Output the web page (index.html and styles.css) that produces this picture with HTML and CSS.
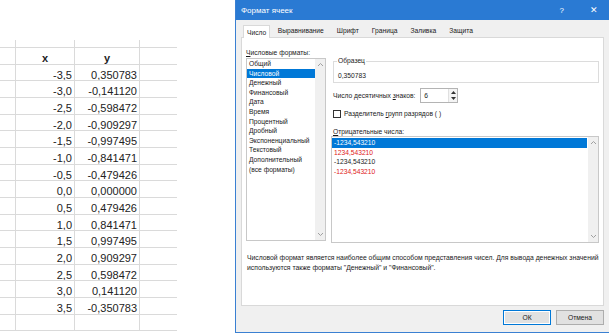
FILE: index.html
```html
<!DOCTYPE html>
<html lang="ru">
<head>
<meta charset="utf-8">
<link rel="stylesheet" href="styles.css">
</head>
<body>
<div class="page">
  <div class="sheet">
    <div class="grid">
      <div class="c top"></div><div class="c top"></div><div class="c top"></div><div class="c top last"></div>
      <div class="c"></div><div class="c hdr">x</div><div class="c hdr">y</div><div class="c last"></div>
      <div class="c"></div><div class="c num">-3,5</div><div class="c num">0,350783</div><div class="c last"></div>
      <div class="c"></div><div class="c num">-3,0</div><div class="c num">-0,141120</div><div class="c last"></div>
      <div class="c"></div><div class="c num">-2,5</div><div class="c num">-0,598472</div><div class="c last"></div>
      <div class="c"></div><div class="c num">-2,0</div><div class="c num">-0,909297</div><div class="c last"></div>
      <div class="c"></div><div class="c num">-1,5</div><div class="c num">-0,997495</div><div class="c last"></div>
      <div class="c"></div><div class="c num">-1,0</div><div class="c num">-0,841471</div><div class="c last"></div>
      <div class="c"></div><div class="c num">-0,5</div><div class="c num">-0,479426</div><div class="c last"></div>
      <div class="c"></div><div class="c num">0,0</div><div class="c num">0,000000</div><div class="c last"></div>
      <div class="c"></div><div class="c num">0,5</div><div class="c num">0,479426</div><div class="c last"></div>
      <div class="c"></div><div class="c num">1,0</div><div class="c num">0,841471</div><div class="c last"></div>
      <div class="c"></div><div class="c num">1,5</div><div class="c num">0,997495</div><div class="c last"></div>
      <div class="c"></div><div class="c num">2,0</div><div class="c num">0,909297</div><div class="c last"></div>
      <div class="c"></div><div class="c num">2,5</div><div class="c num">0,598472</div><div class="c last"></div>
      <div class="c"></div><div class="c num">3,0</div><div class="c num">0,141120</div><div class="c last"></div>
      <div class="c"></div><div class="c num">3,5</div><div class="c num">-0,350783</div><div class="c last"></div>
      <div class="c"></div><div class="c"></div><div class="c"></div><div class="c last"></div>
    </div>
  </div>

  <div class="dialog">
    <div class="titlebar">
      <span class="title">Формат ячеек</span>
      <span class="tb-btns"><span class="tb-help">?</span><span class="tb-close">✕</span></span>
    </div>
    <div class="dbody">
      <div class="tabs">
        <span class="tab active">Число</span>
        <span class="tab">Выравнивание</span>
        <span class="tab">Шрифт</span>
        <span class="tab">Граница</span>
        <span class="tab">Заливка</span>
        <span class="tab">Защита</span>
      </div>
      <div class="panel">
        <div class="cols">
          <div class="leftcol">
            <div class="label"><u>Ч</u>исловые форматы:</div>
            <div class="listbox fmt">
              <div class="items">
                <div class="item">Общий</div>
                <div class="item sel">Числовой</div>
                <div class="item">Денежный</div>
                <div class="item">Финансовый</div>
                <div class="item">Дата</div>
                <div class="item">Время</div>
                <div class="item">Процентный</div>
                <div class="item">Дробный</div>
                <div class="item">Экспоненциальный</div>
                <div class="item">Текстовый</div>
                <div class="item">Дополнительный</div>
                <div class="item">(все форматы)</div>
              </div>
              <div class="vscroll">
                <svg class="arr" width="7" height="5" viewBox="0 0 7 5"><path d="M1 4 L3.5 1.5 L6 4" fill="none" stroke="#a0a0a0" stroke-width="1"/></svg>
                <svg class="arr" width="7" height="5" viewBox="0 0 7 5"><path d="M1 1 L3.5 3.5 L6 1" fill="none" stroke="#a0a0a0" stroke-width="1"/></svg>
              </div>
            </div>
          </div>
          <div class="rightcol">
            <fieldset class="sample">
              <legend>Образец</legend>
              <div class="sample-val">0,350783</div>
            </fieldset>
            <div class="decimals">
              <span>Число десятичных <u>з</u>наков:</span>
              <div class="spin">
                <span class="spin-val">6</span>
                <div class="spin-btns">
                  <span class="sb"><svg width="5" height="3" viewBox="0 0 5 3"><path d="M0 3 L2.5 0 L5 3Z" fill="#333"/></svg></span>
                  <span class="sb"><svg width="5" height="3" viewBox="0 0 5 3"><path d="M0 0 L2.5 3 L5 0Z" fill="#333"/></svg></span>
                </div>
              </div>
            </div>
            <div class="check">
              <span class="box"></span>
              <span>Разделитель <u>г</u>рупп разрядов ( )</span>
            </div>
            <div class="label neg-label"><u>О</u>трицательные числа:</div>
            <div class="listbox neg">
              <div class="items">
                <div class="item sel">-1234,543210</div>
                <div class="item red">1234,543210</div>
                <div class="item">-1234,543210</div>
                <div class="item red">-1234,543210</div>
              </div>
              <div class="vscroll">
                <svg class="arr" width="7" height="5" viewBox="0 0 7 5"><path d="M1 4 L3.5 1.5 L6 4" fill="none" stroke="#a0a0a0" stroke-width="1"/></svg>
                <svg class="arr" width="7" height="5" viewBox="0 0 7 5"><path d="M1 1 L3.5 3.5 L6 1" fill="none" stroke="#a0a0a0" stroke-width="1"/></svg>
              </div>
            </div>
          </div>
        </div>
        <p class="desc">Числовой формат является наиболее общим способом представления чисел. Для вывода денежных значений<br>используются также форматы "Денежный" и "Финансовый".</p>
      </div>
      <div class="buttons">
        <span class="btn default">ОК</span>
        <span class="btn">Отмена</span>
      </div>
    </div>
  </div>
</div>
</body>
</html>
```

FILE: styles.css
```css
* { box-sizing: border-box; }
html, body { margin: 0; padding: 0; background: #fff; }
body { width: 609px; height: 336px; overflow: hidden; }

.page { display: flex; align-items: flex-start; height: 336px; }

/* Spreadsheet */
.sheet { width: 235px; flex: none; padding-top: 40px; }
.grid {
  display: grid;
  width: 177px;
  grid-template-columns: 16px 59px 65px 37px;
  grid-template-rows: 8px repeat(17, 16.67px);
  font-family: "Liberation Sans", Arial, sans-serif;
  font-size: 11px;
  color: #222;
}
.c {
  border-right: 1px solid #dadada;
  border-bottom: 1px solid #dadada;
  line-height: 16px;
  padding-top: 2px;
  white-space: nowrap;
  overflow: hidden;
}
.c.top { padding-top: 0; }
.c.last { border-right: none; }
.hdr { text-align: center; font-weight: bold; }
.num { text-align: right; padding-right: 2px; }

/* Dialog */
.dialog {
  width: 374px;
  flex: none;
  min-width: 0;
  height: 333px;
  border-left: 1px solid #3a80d2;
  border-bottom: 1px solid #3a80d2;
  background: #f0f0f0;
  font-family: "Liberation Sans", Arial, sans-serif;
  font-size: 6.7px;
  color: #1a1a1a;
  display: flex;
  flex-direction: column;
  overflow: hidden;
}
.titlebar {
  height: 20px;
  background: #2a7ad3;
  color: #fff;
  display: flex;
  align-items: center;
  justify-content: space-between;
  padding: 0 11px 0 5px;
  flex: none;
}
.title { font-size: 8px; }
.tb-btns { display: flex; align-items: center; gap: 26px; }
.tb-help { font-size: 8px; }
.tb-close { font-size: 9px; }

.dbody { flex: 1; min-width: 0; display: flex; flex-direction: column; padding: 4px 5px 4px 5px; }
.tabs { display: flex; height: 13px; padding-left: 2px; align-items: stretch; }
.tab {
  display: flex; align-items: center;
  padding: 0 6.5px;
  white-space: nowrap;
}
.tab.active {
  background: #fff;
  border: 1px solid #d9d9d9;
  border-bottom: none;
  padding: 0 3px;
  margin-right: 1px;
  position: relative;
  top: 1px;
}
.panel {
  height: 269px;
  min-width: 0;
  background: #fff;
  border: 1px solid #d9d9d9;
  padding: 10px 4px 0 4px;
  display: flex;
  flex-direction: column;
}
.cols { display: flex; gap: 5px; }
.leftcol { width: 80px; flex: none; }
.rightcol { flex: 1; display: flex; flex-direction: column; padding-left: 0; }
.label { line-height: 9px; height: 10px; }

.listbox {
  border: 1px solid #c8c8c8;
  display: flex;
  background: #fff;
}
.listbox.fmt { height: 183px; }
.listbox .items { flex: 1; padding-top: 0; }
.item { line-height: 9.6px; height: 9.6px; padding-left: 2px; white-space: nowrap; }
.item.sel { background: #0078d7; color: #fff; }
.item.red { color: #e02020; }
.vscroll {
  width: 10px;
  background: #f0f0f0;
  display: flex;
  flex-direction: column;
  justify-content: space-between;
  align-items: center;
  padding: 3px 0;
}
.arr { display: block; }

.sample {
  margin: 9px 0 0 2px;
  border: 1px solid #dcdcdc;
  padding: 0 4px 2px 4px;
  height: 26px;
}
.sample legend { padding: 0 1px; line-height: 8px; margin-left: -1px; }
.sample-val { line-height: 9px; margin-top: 6px; }

.decimals {
  display: flex; align-items: center;
  margin-top: 5px; margin-left: 2px;
  gap: 5px;
}
.spin {
  width: 38px; height: 15px;
  border: 1px solid #b4b4b4;
  display: flex;
  background: #fff;
}
.spin-val { flex: 1; padding-left: 3px; line-height: 13px; }
.spin-btns { width: 9px; display: flex; flex-direction: column; border-left: 1px solid #e0e0e0; }
.sb { flex: 1; display: flex; align-items: center; justify-content: center; background: #f4f4f4; }

.check { display: flex; align-items: center; gap: 3px; margin: 6px 0 0 2px; height: 9px; }
.box { width: 8px; height: 8px; border: 1px solid #333; background: #fff; }

.neg-label { margin: 9px 0 0 2px; }
.listbox.neg { height: 107px; margin-top: -1px; }
.listbox.neg .items { padding-top: 1px; }
.listbox.neg .item { line-height: 9.6px; height: 9.6px; }
.listbox.neg .item.sel { margin-right: 1px; }

.desc {
  margin: 10px 0 0 1px;
  line-height: 10px;
  font-size: 6.8px;
  white-space: nowrap;
}

.buttons {
  flex: 1;
  display: flex;
  justify-content: flex-end;
  align-items: center;
  gap: 5px;
  padding-top: 0;
}
.btn {
  width: 48px; height: 15px;
  background: #e1e1e1;
  border: 1px solid #adadad;
  display: flex; align-items: center; justify-content: center;
}
.btn.default { border: 1px solid #0078d7; box-shadow: inset 0 0 0 1px #fff; }
```
